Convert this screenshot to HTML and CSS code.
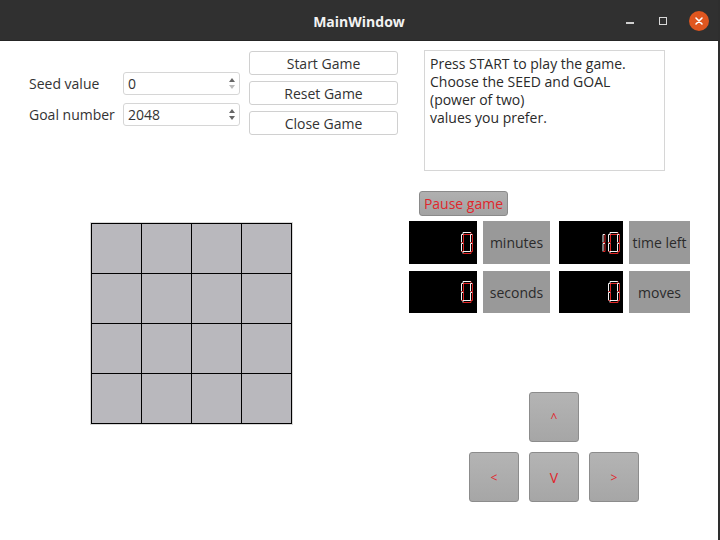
FILE: index.html
```html
<!DOCTYPE html>
<html>
<head>
<meta charset="utf-8">
<link rel="stylesheet" href="styles.css">
</head>
<body>
<svg class="defs" width="0" height="0">
  <defs>
    <g id="seg-h-top"></g>
    <symbol id="d0" viewBox="0 0 12 22">
      <g fill="none" stroke-width="1">
        <path stroke="#f4f4f4" d="M2 2.5 V0.5 H10"/><path stroke="#e02424" d="M10 0.5 V2.5 H2"/>
        <path stroke="#f4f4f4" d="M0.5 10.5 V2.5 H2.5"/><path stroke="#e02424" d="M2.5 2.5 V10.5 H0.5"/>
        <path stroke="#f4f4f4" d="M9.5 10.5 V2.5 H11.5"/><path stroke="#e02424" d="M11.5 2.5 V10.5 H9.5"/>
        <path stroke="#f4f4f4" d="M0.5 19.5 V11.5 H2.5"/><path stroke="#e02424" d="M2.5 11.5 V19.5 H0.5"/>
        <path stroke="#f4f4f4" d="M9.5 19.5 V11.5 H11.5"/><path stroke="#e02424" d="M11.5 11.5 V19.5 H9.5"/>
        <path stroke="#f4f4f4" d="M2 21.5 V19.5 H10"/><path stroke="#e02424" d="M10 19.5 V21.5 H2"/>
      </g>
    </symbol>
    <symbol id="d1" viewBox="0 0 4 22">
      <g fill="none" stroke-width="1">
        <path stroke="#f4f4f4" d="M1 10.5 V2.5 H3"/><path stroke="#e02424" d="M3 2.5 V10.5 H1"/>
        <path stroke="#f4f4f4" d="M1 19.5 V11.5 H3"/><path stroke="#e02424" d="M3 11.5 V19.5 H1"/>
      </g>
    </symbol>
  </defs>
</svg>
<div class="screen">
  <div class="titlebar">
    <div class="title">MainWindow</div>
    <div class="controls">
      <span class="ctl-min"></span>
      <span class="ctl-max"></span>
      <span class="ctl-close">
        <svg width="18" height="18" viewBox="0 0 18 18"><path d="M6 6 L12 12 M12 6 L6 12" stroke="#fff" stroke-width="1.6" stroke-linecap="round"/></svg>
      </span>
    </div>
  </div>
  <div class="content">
    <div class="leftcol">
      <div class="toprow">
        <div class="form">
          <div class="frow">
            <span class="flabel">Seed value</span>
            <div class="spin"><span class="spin-val">0</span>
              <span class="spin-arrows"><span class="up"></span><span class="down dim"></span></span>
            </div>
          </div>
          <div class="frow">
            <span class="flabel">Goal number</span>
            <div class="spin"><span class="spin-val">2048</span>
              <span class="spin-arrows"><span class="up"></span><span class="down"></span></span>
            </div>
          </div>
        </div>
        <div class="buttons">
          <div class="btn">Start Game</div>
          <div class="btn">Reset Game</div>
          <div class="btn">Close Game</div>
        </div>
      </div>
      <div class="board">
        <div class="cell"></div><div class="cell"></div><div class="cell"></div><div class="cell"></div>
        <div class="cell"></div><div class="cell"></div><div class="cell"></div><div class="cell"></div>
        <div class="cell"></div><div class="cell"></div><div class="cell"></div><div class="cell"></div>
        <div class="cell"></div><div class="cell"></div><div class="cell"></div><div class="cell"></div>
      </div>
    </div>
    <div class="rightcol">
      <div class="info">Press START to play the game.<br>Choose the SEED and GOAL<br>(power of two)<br>values you prefer.</div>
      <div class="pause">Pause game</div>
      <div class="lcdgrid">
        <div class="lcd"><svg class="dig" width="12" height="22"><use href="#d0"/></svg></div>
        <div class="glabel">minutes</div>
        <div class="lcd lcd-b"><svg class="dig1" width="4" height="22"><use href="#d1"/></svg><svg class="dig" width="12" height="22"><use href="#d0"/></svg></div>
        <div class="glabel">time left</div>
        <div class="lcd"><svg class="dig" width="12" height="22"><use href="#d0"/></svg></div>
        <div class="glabel">seconds</div>
        <div class="lcd lcd-b"><svg class="dig" width="12" height="22"><use href="#d0"/></svg></div>
        <div class="glabel">moves</div>
      </div>
      <div class="pad">
        <div class="padrow"><div class="key">^</div></div>
        <div class="padrow"><div class="key">&lt;</div><div class="key key-v">V</div><div class="key">&gt;</div></div>
      </div>
    </div>
  </div>
</div>
</body>
</html>
```
FILE: styles.css
```css
* { box-sizing: border-box; }
html, body { margin: 0; padding: 0; }
body {
  width: 720px; height: 540px; overflow: hidden;
  background: #2e2e2e;
  font-family: "Open Sans", "DejaVu Sans", sans-serif;
  font-size: 14px;
  color: #333;
}
.defs { position: absolute; width: 0; height: 0; }
.screen { width: 720px; height: 540px; display: flex; flex-direction: column; }
.titlebar {
  height: 41px; width: 718px; background: #303030;
  display: flex; align-items: center; justify-content: center; position: relative;
  border-bottom: 1px solid #252525; padding-top: 3px;
}
.title { color: #f2f2f2; font-weight: bold; font-size: 14px; font-family: "Open Sans", sans-serif; }
.controls { position: absolute; right: 9px; top: 11px; display: flex; align-items: center; height: 20px; }
.ctl-min { width: 8px; height: 2px; background: #cfcfcf; margin-right: 25px; margin-top: 4px; }
.ctl-max { width: 8px; height: 8px; border: 1px solid #d8d8d8; margin-right: 22px; }
.ctl-close {
  width: 20px; height: 20px; border-radius: 50%; background: #e0561f;
  display: flex; align-items: center; justify-content: center;
}
.content {
  flex: 1; width: 718px; background: #fff; display: flex;
}
.leftcol { width: 409px; padding-top: 10px; }
.toprow { display: flex; }
.form { margin-left: 29px; padding-top: 21px; display: flex; flex-direction: column; gap: 8px; }
.frow { display: flex; align-items: center; }
.flabel { width: 94px; margin-top: -1px; }
.spin {
  width: 117px; height: 23px; border: 1px solid #d6d6d6; border-radius: 3px;
  display: flex; align-items: center; justify-content: space-between; padding-left: 4px;
}
.spin-arrows { display: flex; flex-direction: column; align-items: center; justify-content: center; gap: 3px; width: 14px; height: 100%; }
.up { width: 0; height: 0; border-left: 3px solid transparent; border-right: 3px solid transparent; border-bottom: 4px solid #666; }
.down { width: 0; height: 0; border-left: 3px solid transparent; border-right: 3px solid transparent; border-top: 4px solid #666; }
.down.dim { border-top-color: #bbb; }
.buttons { margin-left: 9px; display: flex; flex-direction: column; gap: 6px; }
.btn {
  width: 149px; height: 24px; border: 1px solid #d0d0d0; border-radius: 3px; background: #fff;
  display: flex; align-items: center; justify-content: center;
}
.board {
  margin-top: 87px; margin-left: 90px; width: 203px; height: 203px;
  border: 1px solid #d8d8d8; background: #000; padding: 1px;
  display: grid; grid-template-columns: repeat(4, 1fr); grid-template-rows: repeat(4, 1fr); gap: 1px;
}
.cell { background: #b9b8bd; }
.rightcol { flex: 1; display: flex; flex-direction: column; align-items: flex-start; }
.info {
  margin-top: 9px; margin-left: 15px; width: 241px; height: 121px;
  border: 1px solid #d6d6d6; padding: 4px 5px; line-height: 18px; color: #2a2a2a;
}
.pause {
  margin-top: 20px; margin-left: 10px; width: 89px; height: 25px;
  background: linear-gradient(#b0b0b0, #a2a2a2); border: 1px solid #8a8a8a; border-radius: 3px;
  color: #e0262b; display: flex; align-items: center; justify-content: center;
}
.lcdgrid {
  margin-top: 5px; display: grid; grid-template-columns: 68px 67px 67px 61px;
  column-gap: 6px; row-gap: 7px; grid-template-rows: 43px 42px;
}
.lcd { background: #000; display: flex; justify-content: flex-end; align-items: center; padding-right: 4px; gap: 1px; }
.lcd-b { margin-left: 3px; padding-right: 3px; }
.dig1 { margin-right: 1px; }
.glabel { background: #999; display: flex; align-items: center; justify-content: center; color: #2b2b2b; }
.pad { margin-top: 79px; margin-left: 60px; display: flex; flex-direction: column; gap: 10px; }
.padrow { display: flex; gap: 10px; justify-content: center; }
.key {
  width: 50px; height: 50px; border: 1px solid #8c8c8c; border-radius: 3px;
  background: linear-gradient(#b4b4b4, #a6a6a6); color: #e0262b;
  display: flex; align-items: center; justify-content: center; font-size: 12px;
}
.key-v { font-size: 14px; }
```
